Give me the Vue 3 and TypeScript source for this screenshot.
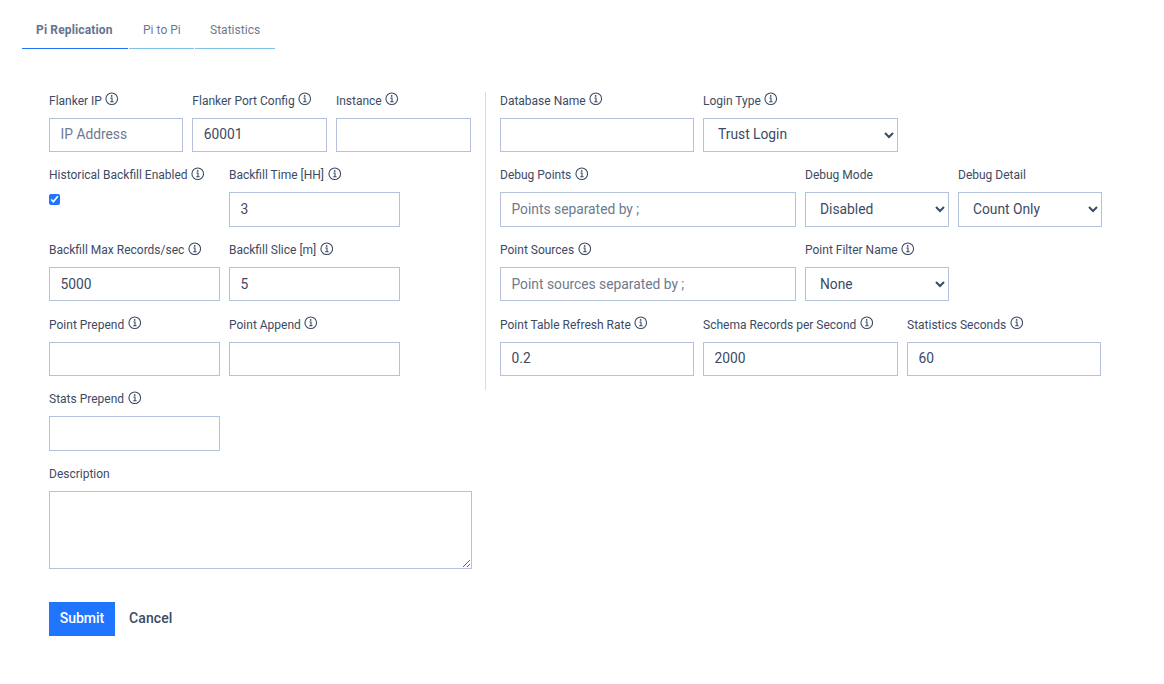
<script setup lang="ts">
interface Field { label: string; info?: boolean; width: number; kind?: 'input' | 'select' | 'check'; value?: string; placeholder?: string; options?: string[] }
const tabs = [
  { name: 'Pi Replication', active: true },
  { name: 'Pi to Pi', active: false },
  { name: 'Statistics', active: false },
]
const leftRows: Field[][] = [
  [
    { label: 'Flanker IP', info: true, width: 134.33, placeholder: 'IP Address' },
    { label: 'Flanker Port Config', info: true, width: 134.6, value: '60001' },
    { label: 'Instance', info: true, width: 135 },
  ],
  [
    { label: 'Historical Backfill Enabled', info: true, width: 171, kind: 'check' },
    { label: 'Backfill Time [HH]', info: true, width: 171, value: '3' },
  ],
  [
    { label: 'Backfill Max Records/sec', info: true, width: 171, value: '5000' },
    { label: 'Backfill Slice [m]', info: true, width: 171, value: '5' },
  ],
  [
    { label: 'Point Prepend', info: true, width: 171 },
    { label: 'Point Append', info: true, width: 171 },
  ],
  [{ label: 'Stats Prepend', info: true, width: 171 }],
]
const rightRows: Field[][] = [
  [
    { label: 'Database Name', info: true, width: 194 },
    { label: 'Login Type', info: true, width: 195, kind: 'select', options: ['Trust Login'] },
  ],
  [
    { label: 'Debug Points', info: true, width: 296, placeholder: 'Points separated by ;' },
    { label: 'Debug Mode', width: 144, kind: 'select', options: ['Disabled'] },
    { label: 'Debug Detail', width: 144, kind: 'select', options: ['Count Only'] },
  ],
  [
    { label: 'Point Sources', info: true, width: 296, placeholder: 'Point sources separated by ;' },
    { label: 'Point Filter Name', info: true, width: 144, kind: 'select', options: ['None'] },
  ],
  [
    { label: 'Point Table Refresh Rate', info: true, width: 194, value: '0.2' },
    { label: 'Schema Records per Second', info: true, width: 195, value: '2000' },
    { label: 'Statistics Seconds', info: true, width: 194, value: '60' },
  ],
]
</script>

<template>
  <div class="page">
    <nav class="tabs">
      <a v-for="t in tabs" :key="t.name" class="tab" :class="{ active: t.active }">{{ t.name }}</a>
    </nav>
    <form class="form" @submit.prevent>
      <div class="columns">
        <div class="left">
          <div v-for="(row, i) in leftRows" :key="i" class="row">
            <div v-for="f in row" :key="f.label" class="field" :style="{ width: f.width + 'px' }">
              <label class="lbl">{{ f.label }}
                <svg v-if="f.info" class="info" viewBox="0 0 16 16"><circle cx="8" cy="8" r="6.9" /><path d="M6.4 7.2H8.3V11.6M6.2 11.6H10.2" /><circle class="dot" cx="7.9" cy="4.7" r="1" /></svg>
              </label>
              <div v-if="f.kind === 'check'" class="check-wrap"><input type="checkbox" class="check" checked /></div>
              <input v-else class="ctl" type="text" :value="f.value" :placeholder="f.placeholder" />
            </div>
          </div>
          <div class="row auto">
            <div class="field desc">
              <label class="lbl">Description</label>
              <textarea class="ctl area"></textarea>
            </div>
          </div>
        </div>
        <div class="right">
          <div v-for="(row, i) in rightRows" :key="i" class="row">
            <div v-for="f in row" :key="f.label" class="field" :style="{ width: f.width + 'px' }">
              <label class="lbl">{{ f.label }}
                <svg v-if="f.info" class="info" viewBox="0 0 16 16"><circle cx="8" cy="8" r="6.9" /><path d="M6.4 7.2H8.3V11.6M6.2 11.6H10.2" /><circle class="dot" cx="7.9" cy="4.7" r="1" /></svg>
              </label>
              <select v-if="f.kind === 'select'" class="ctl sel">
                <option v-for="o in f.options" :key="o">{{ o }}</option>
              </select>
              <input v-else class="ctl" type="text" :value="f.value" :placeholder="f.placeholder" />
            </div>
          </div>
        </div>
      </div>
      <div class="actions">
        <button type="submit" class="submit">Submit</button>
        <button type="button" class="cancel">Cancel</button>
      </div>
    </form>
  </div>
</template>

<style>
html, body { background: #fff; }
</style>

<style scoped>
.page {
  width: 1164px;
  height: 684px;
  overflow: hidden;
  box-sizing: border-box;
  font-family: "Roboto", "Liberation Sans", sans-serif;
  color: #3d4a64;
  padding: 19px 0 0 22px;
}
.tabs { display: flex; gap: 1px; }
.tab {
  height: 29px;
  box-sizing: content-box;
  font-size: 12px;
  line-height: 22px;
  color: #6d7a92;
  white-space: nowrap;
  border-bottom: 1px solid #7fc2ea;
  letter-spacing: 0.03px;
}
.tab:nth-child(1) { width: 92px; padding: 0 0 0 14px; letter-spacing: 0.15px; }
.tab:nth-child(2) { width: 51px; padding: 0 0 0 14px; }
.tab:nth-child(3) { width: 65px; padding: 0 0 0 15px; }
.tab.active { font-weight: 700; color: #66748f; border-bottom-color: #2076fb; }
.form { padding: 42.6px 0 0 27px; }
.columns { display: flex; align-items: flex-start; }
.left { width: 423px; display: flex; flex-direction: column; margin-right: 13px; }
.right {
  border-left: 1px solid #d8dbe2;
  padding-left: 14px;
  height: 298px;
}
.row { display: flex; gap: 9px; height: 74.67px; }
.row.auto { height: auto; }
.field { display: flex; flex-direction: column; flex: none; }
.lbl {
  display: flex;
  align-items: center;
  gap: 3.5px;
  height: 18px;
  margin-bottom: 8px;
  font-size: 12px;
  line-height: 16px;
  white-space: nowrap;
}
.info { width: 13.5px; height: 13.5px; fill: none; stroke: #3d4a64; stroke-width: 1.3; margin-top: -3px; flex: none; }
.info .dot { fill: #3d4a64; stroke: none; }
.ctl {
  box-sizing: border-box;
  width: 100%;
  height: 34.5px;
  border: 1px solid #b4c1db;
  border-radius: 0;
  background: #fff;
  padding: 0 10.5px 1px;
  font: 13.8px "Roboto", "Liberation Sans", sans-serif;
  color: #3d4a64;
  outline: none;
}
.ctl::placeholder { color: #6e7a8e; opacity: 1; }
.sel { padding: 0 10px 1px; }
.check-wrap { height: 34px; display: flex; align-items: flex-start; padding-top: 2px; }
.check { width: 11px; height: 11px; margin: 0; accent-color: #1f75ff; }
.desc { width: 423px; }
.area { height: 78px; padding: 6px 11px; resize: vertical; display: block; }
.actions { display: flex; align-items: center; margin-top: 33px; }
.submit {
  width: 66px;
  height: 34px;
  border: 0;
  background: #1f75fe;
  color: #fff;
  font: 500 14px "Roboto", "Liberation Sans", sans-serif;
  padding: 0 0 1px;
}
.cancel {
  border: 0;
  background: none;
  color: #3d4a64;
  font: 500 14px "Roboto", "Liberation Sans", sans-serif;
  letter-spacing: 0.1px;
  margin-left: 14px;
  padding: 0 0 1px;
}
</style>
